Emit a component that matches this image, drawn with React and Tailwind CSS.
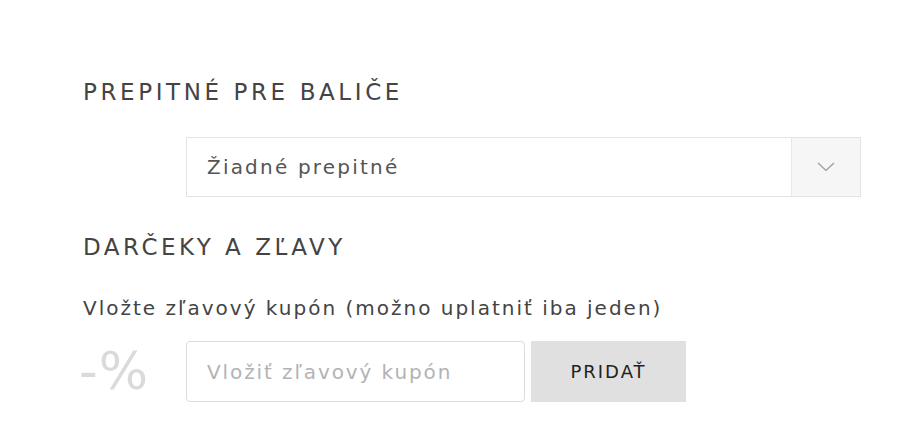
import React from "react";

export default function App() {
  const font = { fontFamily: '"DejaVu Sans", "Open Sans", sans-serif' };
  return (
    <div className="w-[900px] h-[441px] bg-white overflow-hidden" style={font}>
      <div className="pl-[83px] pt-[77px] flex flex-col">
        <h2 className="text-[23px] leading-[30px] text-[#444] font-normal tracking-[3.6px] h-[30px] whitespace-nowrap">
          PREPITNÉ PRE BALIČE
        </h2>
        <div className="ml-[103px] mt-[30px] w-[675px] h-[60px] border border-[#e3e3e3] flex items-stretch">
          <div className="flex-1 flex items-center pl-[20px] text-[20px] tracking-[2.2px] text-[#555]">
            Žiadné prepitné
          </div>
          <div className="w-[69px] bg-[#f6f6f6] border-l border-[#e8e8e8] flex items-center justify-center">
            <svg width="18" height="10" viewBox="0 0 18 10" fill="none">
              <path d="M1 1 L9 8.5 L17 1" stroke="#9a9a9a" strokeWidth="1.2" />
            </svg>
          </div>
        </div>
        <h2 className="mt-[35px] text-[23px] leading-[30px] text-[#444] font-normal tracking-[3.5px] h-[30px] whitespace-nowrap">
          DARČEKY A ZĽAVY
        </h2>
        <div className="mt-[33px] text-[20px] leading-[26px] tracking-[2px] text-[#444] whitespace-nowrap">
          Vložte zľavový kupón (možno uplatniť iba jeden)
        </div>
        <div className="mt-[20px] flex items-center">
          <div className="w-[103px] text-[52px] leading-[61px] text-[#dadada] -ml-[4px] tracking-[1px]">-%</div>
          <div className="w-[339px] h-[61px] border border-[#dcdcdc] rounded-[4px] flex items-center pl-[20px] text-[20px] tracking-[1.9px] text-[#b3b3b3] ml-[4px] whitespace-nowrap">
            Vložiť zľavový kupón
          </div>
          <button className="ml-[6px] w-[155px] h-[61px] bg-[#e0e0e0] text-[18px] tracking-[2px] text-[#222] flex items-center justify-center">
            PRIDAŤ
          </button>
        </div>
      </div>
    </div>
  );
}
